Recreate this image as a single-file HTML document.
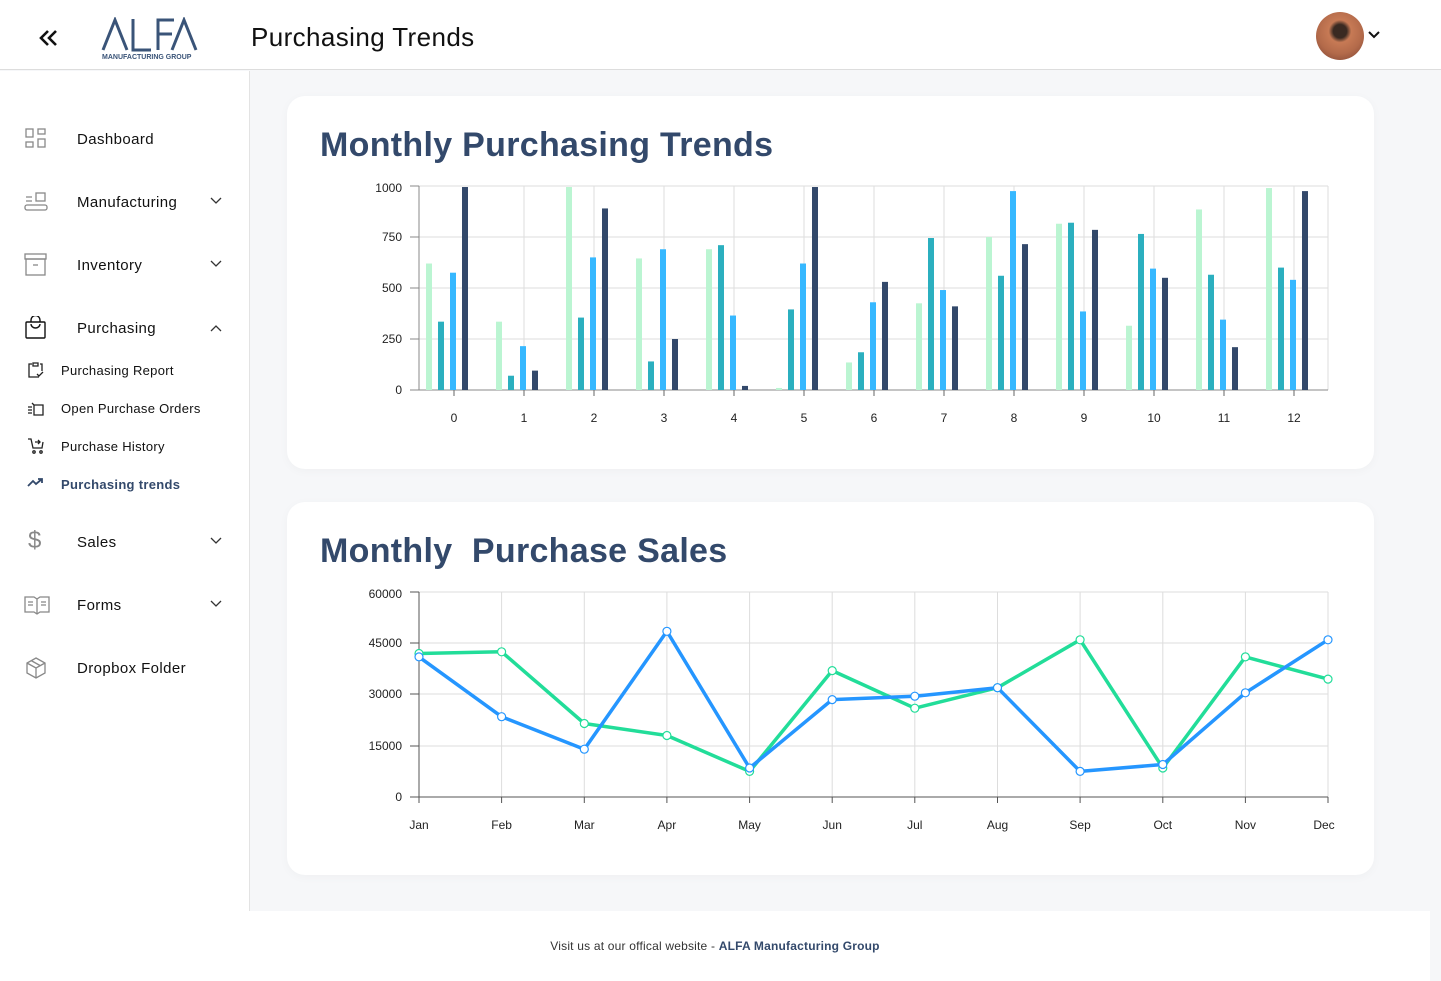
<!DOCTYPE html>
<html><head><meta charset="utf-8"><style>
*{box-sizing:border-box;margin:0;padding:0}
body{width:1441px;height:981px;background:#f6f7f9;font-family:"Liberation Sans",sans-serif;position:relative;overflow:hidden;color:#111}
.top{position:absolute;left:0;top:0;width:1441px;height:70px;background:#fff;border-bottom:1px solid #ddd}
.side{position:absolute;left:0;top:71px;width:250px;height:840px;background:#fff;border-right:1px solid #e3e3e3}
.it{position:absolute;left:77px;font-size:15px;color:#111;letter-spacing:.4px}
.sub{position:absolute;left:61px;font-size:13px;color:#111;letter-spacing:.3px}
.ic{position:absolute;left:24px}
.chev{position:absolute;left:210px}
.card{position:absolute;left:287px;width:1087px;height:373px;background:#fff;border-radius:18px;box-shadow:0 2px 10px rgba(0,0,0,.03)}
.card h2{position:absolute;left:33px;top:30px;font-size:34px;font-weight:bold;color:#33496b;letter-spacing:.3px}
.foot{position:absolute;left:0;top:911px;width:1430px;height:70px;background:#fff;font-size:12px;color:#333;text-align:center;padding-top:28px;letter-spacing:.2px}
svg text{font-family:"Liberation Sans",sans-serif;font-size:12px;fill:#222}
</style></head><body>
<div class="top">
<svg style="position:absolute;left:38px;top:29px" width="22" height="18" viewBox="0 0 22 18"><path d="M10 2 3 9l7 7M18 2l-7 7 7 7" fill="none" stroke="#111" stroke-width="2.6"/></svg>
<svg style="position:absolute;left:100px;top:17px" width="104" height="44" viewBox="0 0 104 44"><path d="M3 33 15 3 27 33M33 2v31h18M58 33V3h16M58 17h14M72 33 84 3 96 33" fill="none" stroke="#3a5478" stroke-width="3"/><text x="2" y="42" style="font-size:7px;font-weight:bold;fill:#3a5478">MANUFACTURING GROUP</text></svg>
<div style="position:absolute;left:251px;top:22px;font-size:26px;color:#111;letter-spacing:.4px">Purchasing Trends</div>
<div style="position:absolute;left:1316px;top:12px;width:48px;height:48px;border-radius:50%;background:radial-gradient(circle at 50% 40%,#3a2a22 0 18%,#c77a55 30%,#b36a4a 60%,#7a4030 100%)"></div>
<svg style="position:absolute;left:1367px;top:30px" width="14" height="10"><path d="M2 2l5 5 5-5" fill="none" stroke="#111" stroke-width="2"/></svg>
</div>
<div class="side">
<svg class="ic" style="top:57px" width="24" height="22" fill="none" stroke="#888" stroke-width="1.3"><rect x="2" y="1" width="7" height="8"/><rect x="14" y="1" width="7" height="5"/><rect x="2" y="14" width="7" height="5"/><rect x="14" y="11" width="7" height="8"/></svg>
<div class="it" style="top:60px">Dashboard</div>
<svg class="ic" style="top:120px" width="24" height="22" fill="none" stroke="#888" stroke-width="1.3"><rect x="12" y="2" width="9" height="8"/><path d="M2 6h6M2 10h6"/><rect x="1" y="14" width="22" height="5" rx="2"/></svg>
<div class="it" style="top:123px">Manufacturing</div>
<svg class="chev" style="top:126px" width="12" height="8"><path d="M1 1l5 5 5-5" fill="none" stroke="#333" stroke-width="1.3"/></svg>
<svg class="ic" style="top:182px" width="24" height="24" fill="none" stroke="#888" stroke-width="1.3"><rect x="1" y="1" width="21" height="5"/><rect x="2" y="6" width="19" height="16"/><path d="M9 12h5"/></svg>
<div class="it" style="top:186px">Inventory</div>
<svg class="chev" style="top:189px" width="12" height="8"><path d="M1 1l5 5 5-5" fill="none" stroke="#333" stroke-width="1.3"/></svg>
<svg class="ic" style="top:245px" width="24" height="24" fill="none" stroke="#111" stroke-width="1.4"><rect x="2" y="6" width="19" height="16" rx="1"/><path d="M7 6V4a4 4 0 0 1 9 0v2M7 8a4.5 4 0 0 0 9 0"/></svg>
<div class="it" style="top:249px">Purchasing</div>
<svg class="chev" style="top:253px" width="12" height="8"><path d="M1 7l5-5 5 5" fill="none" stroke="#333" stroke-width="1.3"/></svg>
<svg class="ic" style="top:290px;left:27px" width="18" height="18" fill="none" stroke="#222" stroke-width="1.3"><path d="M5 3H2v13h10M13 3h2v7M6 2h5v3H6zM10 13l2 2 4-4"/></svg>
<div class="sub" style="top:292px">Purchasing Report</div>
<svg class="ic" style="top:328px;left:27px" width="18" height="18" fill="none" stroke="#222" stroke-width="1.3"><path d="M5 4l2 2v10h9V6H7M1 8h4M1 11h4M1 14h4"/></svg>
<div class="sub" style="top:330px">Open Purchase Orders</div>
<svg class="ic" style="top:366px;left:27px" width="18" height="18" fill="none" stroke="#222" stroke-width="1.3"><path d="M1 2h3l2 9h9l1-6M8 5h5M11 3l2 2-2 2"/><circle cx="7" cy="15" r="1.2"/><circle cx="14" cy="15" r="1.2"/></svg>
<div class="sub" style="top:368px">Purchase History</div>
<svg class="ic" style="top:405px;left:27px" width="18" height="14" fill="none" stroke="#33496b" stroke-width="1.8"><path d="M1 10l5-5 3 3 6-5M11 3h4v4"/></svg>
<div class="sub" style="top:406px;font-weight:bold;color:#33496b">Purchasing trends</div>
<div class="ic" style="top:456px;left:28px;font-size:24px;color:#888">$</div>
<div class="it" style="top:463px">Sales</div>
<svg class="chev" style="top:466px" width="12" height="8"><path d="M1 1l5 5 5-5" fill="none" stroke="#333" stroke-width="1.3"/></svg>
<svg class="ic" style="top:523px" width="26" height="22" fill="none" stroke="#888" stroke-width="1.3"><path d="M1 3h9l3 2 3-2h9v15h-9l-3 2-3-2H1zM13 5v15M4 8h5M4 11h5M17 8h5M17 11h5"/></svg>
<div class="it" style="top:526px">Forms</div>
<svg class="chev" style="top:529px" width="12" height="8"><path d="M1 1l5 5 5-5" fill="none" stroke="#333" stroke-width="1.3"/></svg>
<svg class="ic" style="top:585px" width="24" height="24" fill="none" stroke="#888" stroke-width="1.3"><path d="M12 2l9 5v10l-9 5-9-5V7zM3 7l9 5 9-5M12 12v10M7 4.5l9 5"/></svg>
<div class="it" style="top:589px">Dropbox Folder</div>
</div>

<div class="card" style="top:96px"><h2>Monthly Purchasing Trends</h2></div>
<div class="card" style="top:502px"><h2>Monthly&nbsp; Purchase Sales</h2></div>

<svg style="position:absolute;left:0;top:0" width="1441" height="981">
<g stroke="#ddd" stroke-width="1">
<path d="M419 186H1328M419 237H1328M419 288H1328M419 339H1328M1328 186V390M524 186V390M594 186V390M664 186V390M734 186V390M804 186V390M874 186V390M944 186V390M1014 186V390M1084 186V390M1154 186V390M1224 186V390M1294 186V390"/>
</g>
<path d="M419 186V390H1328M410 390h9M410 339h9M410 288h9M410 237h9M410 186h9" stroke="#888" fill="none"/>
<g stroke="#666"><path d="M454 390v6M524 390v6M594 390v6M664 390v6M734 390v6M804 390v6M874 390v6M944 390v6M1014 390v6M1084 390v6M1154 390v6M1224 390v6M1294 390v6"/></g>
<g transform="translate(0,390) scale(1,-0.204)">
<g fill="#bbf5d2"><rect x="426" width="6" height="620"/><rect x="496" width="6" height="335"/><rect x="566" width="6" height="995"/><rect x="636" width="6" height="645"/><rect x="706" width="6" height="690"/><rect x="776" width="6" height="10"/><rect x="846" width="6" height="135"/><rect x="916" width="6" height="425"/><rect x="986" width="6" height="750"/><rect x="1056" width="6" height="815"/><rect x="1126" width="6" height="315"/><rect x="1196" width="6" height="885"/><rect x="1266" width="6" height="990"/></g>
<g fill="#2bafbf"><rect x="438" width="6" height="335"/><rect x="508" width="6" height="70"/><rect x="578" width="6" height="355"/><rect x="648" width="6" height="140"/><rect x="718" width="6" height="710"/><rect x="788" width="6" height="395"/><rect x="858" width="6" height="185"/><rect x="928" width="6" height="745"/><rect x="998" width="6" height="560"/><rect x="1068" width="6" height="820"/><rect x="1138" width="6" height="765"/><rect x="1208" width="6" height="565"/><rect x="1278" width="6" height="600"/></g>
<g fill="#36b8ff"><rect x="450" width="6" height="575"/><rect x="520" width="6" height="215"/><rect x="590" width="6" height="650"/><rect x="660" width="6" height="690"/><rect x="730" width="6" height="365"/><rect x="800" width="6" height="620"/><rect x="870" width="6" height="430"/><rect x="940" width="6" height="490"/><rect x="1010" width="6" height="975"/><rect x="1080" width="6" height="385"/><rect x="1150" width="6" height="595"/><rect x="1220" width="6" height="345"/><rect x="1290" width="6" height="540"/></g>
<g fill="#33496b"><rect x="462" width="6" height="995"/><rect x="532" width="6" height="95"/><rect x="602" width="6" height="890"/><rect x="672" width="6" height="250"/><rect x="742" width="6" height="20"/><rect x="812" width="6" height="995"/><rect x="882" width="6" height="530"/><rect x="952" width="6" height="410"/><rect x="1022" width="6" height="715"/><rect x="1092" width="6" height="785"/><rect x="1162" width="6" height="550"/><rect x="1232" width="6" height="210"/><rect x="1302" width="6" height="975"/></g>
</g>
<g text-anchor="end"><text x="402" y="192">1000</text><text x="402" y="241">750</text><text x="402" y="292">500</text><text x="402" y="343">250</text><text x="402" y="394">0</text></g>
<g text-anchor="middle"><text x="454" y="422">0</text><text x="524" y="422">1</text><text x="594" y="422">2</text><text x="664" y="422">3</text><text x="734" y="422">4</text><text x="804" y="422">5</text><text x="874" y="422">6</text><text x="944" y="422">7</text><text x="1014" y="422">8</text><text x="1084" y="422">9</text><text x="1154" y="422">10</text><text x="1224" y="422">11</text><text x="1294" y="422">12</text></g>

<g stroke="#ddd"><path d="M419 592H1328M419 643H1328M419 694H1328M419 746H1328M501.6 592V797M584.3 592V797M666.9 592V797M749.6 592V797M832.2 592V797M914.8 592V797M997.5 592V797M1080.1 592V797M1162.8 592V797M1245.4 592V797M1328 592V797"/></g>
<path d="M419 592V797H1328M410 797h9M410 746h9M410 694h9M410 643h9M410 592h9M419 797v6M501.6 797v6M584.3 797v6M666.9 797v6M749.6 797v6M832.2 797v6M914.8 797v6M997.5 797v6M1080.1 797v6M1162.8 797v6M1245.4 797v6M1328 797v6" stroke="#555" fill="none"/>
<g text-anchor="end"><text x="402" y="598">60000</text><text x="402" y="647">45000</text><text x="402" y="698">30000</text><text x="402" y="750">15000</text><text x="402" y="801">0</text></g>
<g text-anchor="middle"><text x="419" y="829">Jan</text><text x="501.6" y="829">Feb</text><text x="584.3" y="829">Mar</text><text x="666.9" y="829">Apr</text><text x="749.6" y="829">May</text><text x="832.2" y="829">Jun</text><text x="914.8" y="829">Jul</text><text x="997.5" y="829">Aug</text><text x="1080.1" y="829">Sep</text><text x="1162.8" y="829">Oct</text><text x="1245.4" y="829">Nov</text><text x="1324" y="829">Dec</text></g>
<polyline fill="none" stroke="#22dd99" stroke-width="3.5" stroke-linejoin="round" points="419,653.5 501.6,651.8 584.3,723.5 666.9,735.5 749.6,771.4 832.2,670.6 914.8,708.2 997.5,687.7 1080.1,639.8 1162.8,768 1245.4,656.9 1328,679.1"/>
<polyline fill="none" stroke="#2596ff" stroke-width="3.5" stroke-linejoin="round" points="419,656.9 501.6,716.7 584.3,749.2 666.9,631.3 749.6,768 832.2,699.6 914.8,696.2 997.5,687.7 1080.1,771.4 1162.8,764.5 1245.4,692.8 1328,639.8"/>
<g fill="#fff" stroke="#22dd99" stroke-width="1.2"><circle cx="419" cy="653.5" r="4"/><circle cx="501.6" cy="651.8" r="4"/><circle cx="584.3" cy="723.5" r="4"/><circle cx="666.9" cy="735.5" r="4"/><circle cx="749.6" cy="771.4" r="4"/><circle cx="832.2" cy="670.6" r="4"/><circle cx="914.8" cy="708.2" r="4"/><circle cx="997.5" cy="687.7" r="4"/><circle cx="1080.1" cy="639.8" r="4"/><circle cx="1162.8" cy="768" r="4"/><circle cx="1245.4" cy="656.9" r="4"/><circle cx="1328" cy="679.1" r="4"/></g>
<g fill="#fff" stroke="#2596ff" stroke-width="1.2"><circle cx="419" cy="656.9" r="4"/><circle cx="501.6" cy="716.7" r="4"/><circle cx="584.3" cy="749.2" r="4"/><circle cx="666.9" cy="631.3" r="4"/><circle cx="749.6" cy="768" r="4"/><circle cx="832.2" cy="699.6" r="4"/><circle cx="914.8" cy="696.2" r="4"/><circle cx="997.5" cy="687.7" r="4"/><circle cx="1080.1" cy="771.4" r="4"/><circle cx="1162.8" cy="764.5" r="4"/><circle cx="1245.4" cy="692.8" r="4"/><circle cx="1328" cy="639.8" r="4"/></g>
</svg>
<div class="foot">Visit us at our offical website - <b style="color:#33496b">ALFA Manufacturing Group</b></div>
</body></html>
